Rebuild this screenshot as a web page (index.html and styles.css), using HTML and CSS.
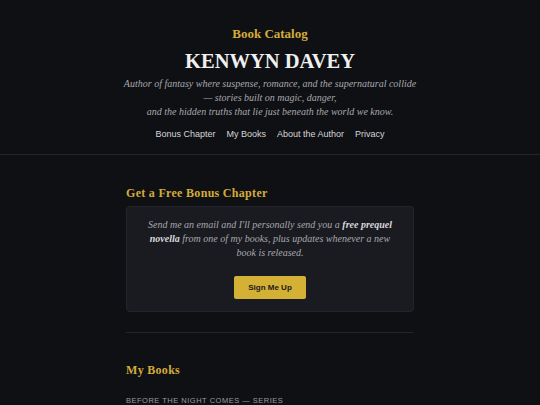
FILE: index.html
```html
<!DOCTYPE html>
<html lang="en">
<head>
  <meta charset="UTF-8">
  <title>Kenwyn Davey — Book Catalog</title>
  <link rel="stylesheet" href="styles.css">
</head>
<body>

  <header class="site-header">
    <div class="catalog-label">Book Catalog</div>
    <h1>KENWYN DAVEY</h1>
    <p class="tagline">
      Author of fantasy where suspense, romance, and the supernatural collide<br>
      — stories built on magic, danger,<br>
      and the hidden truths that lie just beneath the world we know.
    </p>
    <nav class="nav">
      <a href="#bonus">Bonus Chapter</a>
      <a href="#books">My Books</a>
      <a href="#about">About the Author</a>
      <a href="#privacy">Privacy</a>
    </nav>
  </header>

  <main class="container">
    <section id="bonus" class="section">
      <h2>Get a Free Bonus Chapter</h2>
      <div class="signup-card">
        <p>Send me an email and I'll personally send you a <strong>free prequel novella</strong> from one of my books, plus updates whenever a new book is released.</p>
        <button class="btn">Sign Me Up</button>
      </div>
    </section>

    <hr class="divider">

    <section id="books" class="section">
      <h2>My Books</h2>
      <div class="series-label">Before the Night Comes — Series</div>
    </section>
  </main>

</body>
</html>
```

FILE: styles.css
```css
body {
  margin: 0;
  background-color: #0f1014;
  color: #e6e6e6;
  font-family: "Liberation Serif", Georgia, serif;
}

.site-header {
  text-align: center;
  padding: 26px 20px 15px;
  border-bottom: 1px solid #23252b;
}

.catalog-label {
  color: #d3ac3a;
  font-weight: bold;
  font-size: 13px;
}

h1 {
  margin: 8px 0 4px;
  font-size: 20.5px;
  font-weight: bold;
  color: #f0f0f0;
}

.tagline {
  margin: 0;
  font-style: italic;
  font-size: 10px;
  line-height: 14px;
  color: #a7a7ac;
}

.nav {
  margin-top: 10px;
  display: flex;
  justify-content: center;
  gap: 11px;
  font-family: "Liberation Sans", Arial, sans-serif;
  font-size: 9px;
}

.nav a {
  color: #d6d6d8;
  text-decoration: none;
}

.container {
  width: 288px;
  margin: 0 auto;
  padding-top: 31px;
}

h2 {
  color: #d3ac3a;
  font-size: 12px;
  margin: 0 0 5px;
  letter-spacing: 0.3px;
}

.signup-card {
  background-color: #1a1b21;
  border: 1px solid #24252c;
  border-radius: 4px;
  padding: 11px 18px 12px;
  text-align: center;
}

.signup-card p {
  margin: 0 0 16px;
  font-style: italic;
  font-size: 10px;
  line-height: 14px;
  color: #a7a7ac;
}

.signup-card strong {
  color: #d8d8dc;
}

.btn {
  background-color: #d4b034;
  color: #1a1a1a;
  border: none;
  border-radius: 2px;
  padding: 7px 14px;
  font-family: "Liberation Sans", Arial, sans-serif;
  font-weight: bold;
  font-size: 8px;
  cursor: pointer;
}

.divider {
  border: none;
  border-top: 1px solid #23252b;
  margin: 20px 0 30px;
}

.series-label {
  margin-top: 18px;
  font-family: "Liberation Sans", Arial, sans-serif;
  font-size: 7.5px;
  letter-spacing: 0.5px;
  text-transform: uppercase;
  color: #9a9ba0;
}
```
